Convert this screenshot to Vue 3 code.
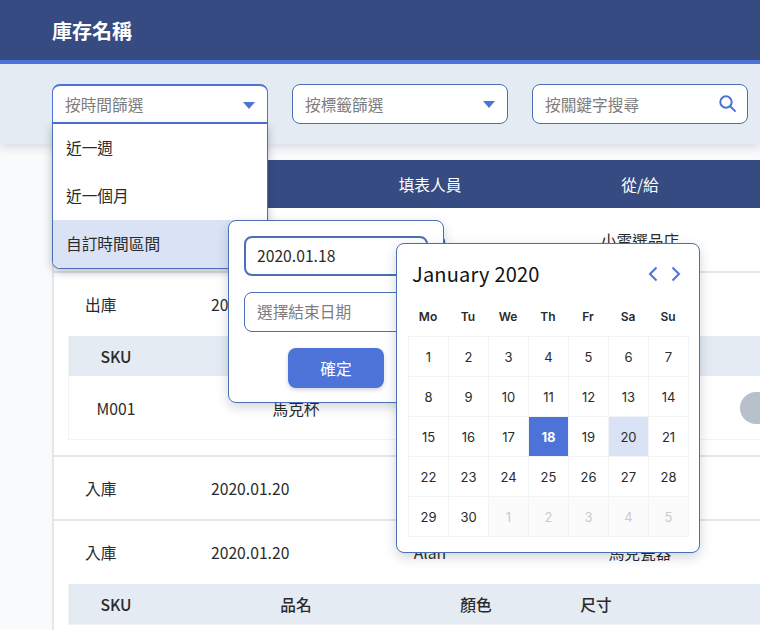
<script setup>
import { ref } from 'vue'

const timeOptions = ['近一週', '近一個月', '自訂時間區間']
const weekDays = ['Mo', 'Tu', 'We', 'Th', 'Fr', 'Sa', 'Su']

// 1 月從週一開始，最後補上下個月的五天
const days = []
for (let d = 1; d <= 30; d++) days.push({ label: d, muted: false })
for (let d = 1; d <= 5; d++) days.push({ label: d, muted: true })

const startDay = ref(18)
const hoverDay = ref(20)

function dayClass(day) {
  if (day.muted) return 'muted'
  if (day.label === startDay.value) return 'start'
  if (day.label === hoverDay.value) return 'hover'
  return ''
}
</script>

<template>
  <div class="page">
    <header class="top">
      <h1>庫存名稱</h1>
    </header>

    <section class="filters">
      <div class="select open">
        <span class="ph">按時間篩選</span>
        <i class="caret"></i>
        <ul class="menu">
          <li v-for="(opt, i) in timeOptions" :key="opt" :class="{ active: i === 2 }">{{ opt }}</li>
        </ul>
        <div class="range">
          <div class="field focus">2020.01.18</div>
          <div class="field ph">選擇結束日期</div>
          <button class="ok">確定</button>
        </div>
        <div class="calendar">
          <div class="cal-head">
            <strong>January 2020</strong>
            <span class="arrows">
              <svg width="10" height="16" viewBox="0 0 10 16"><path d="M8.5 1.5 2 8l6.5 6.5" /></svg>
              <svg width="10" height="16" viewBox="0 0 10 16"><path d="M1.5 1.5 8 8l-6.5 6.5" /></svg>
            </span>
          </div>
          <div class="week">
            <span v-for="w in weekDays" :key="w">{{ w }}</span>
          </div>
          <div class="days">
            <span v-for="(day, i) in days" :key="i" :class="dayClass(day)">{{ day.label }}</span>
          </div>
        </div>
      </div>
      <div class="select">
        <span class="ph">按標籤篩選</span>
        <i class="caret"></i>
      </div>
      <div class="select">
        <span class="ph">按關鍵字搜尋</span>
        <svg class="search" width="20" height="20" viewBox="0 0 20 20">
          <circle cx="8" cy="8" r="5.7" />
          <path d="m12.2 12.2 5.4 5.4" />
        </svg>
      </div>
    </section>

    <main class="content">
      <div class="table">
        <div class="row head">
          <span></span><span></span><span>填表人員</span><span>從/給</span>
        </div>

        <div class="row first">
          <span></span><span></span><span>Alan</span><span>小雲選品店</span>
        </div>

        <div class="group">
          <div class="row">
            <span>出庫</span><span>2020.01.20</span><span></span><span></span>
          </div>
          <div class="sub">
            <div class="sub-row sub-head">
              <span>SKU</span><span></span><span></span><span></span>
            </div>
            <div class="sub-row sub-body">
              <span>M001</span><span>馬克杯</span><span></span><span></span>
              <i class="pill"></i>
            </div>
          </div>
        </div>

        <div class="row">
          <span>入庫</span><span>2020.01.20</span><span></span><span></span>
        </div>

        <div class="group">
          <div class="row">
            <span>入庫</span><span>2020.01.20</span><span>Alan</span><span>馬克瓷器</span>
          </div>
          <div class="sub">
            <div class="sub-row sub-head">
              <span>SKU</span><span>品名</span><span>顏色</span><span>尺寸</span>
            </div>
          </div>
        </div>
      </div>
    </main>
  </div>
</template>

<style>
html, body { margin: 0; }
body { overflow: hidden; }
</style>

<style scoped>
.page {
  width: 760px;
  height: 630px;
  overflow: hidden;
  position: relative;
  background: #f8fafc;
  color: #2a2a2a;
  font-family: "Noto Sans CJK TC", "Noto Sans", sans-serif;
  font-size: 15.7px;
}
.top {
  height: 60px;
  background: #364b82;
  border-bottom: 4px solid #4d73d9;
  display: flex;
  align-items: center;
  padding-left: 52px;
}
.top h1 {
  margin: 2px 0 0;
  color: #fff;
  font-size: 20px;
  font-weight: 700;
  line-height: 60px;
}
.filters {
  position: relative;
  z-index: 2;
  height: 80px;
  box-sizing: border-box;
  padding: 20px 52px;
  display: flex;
  gap: 24px;
  background: #e4ebf3;
  box-shadow: 0 4px 8px rgba(40, 60, 90, 0.14);
}
.select {
  position: relative;
  flex: 0 0 216px;
  height: 40px;
  box-sizing: border-box;
  border: 1px solid #4a6fb5;
  border-radius: 8px;
  background: #fff;
  display: flex;
  align-items: center;
  padding-left: 12px;
}
.select.open {
  border-color: #4d73d9;
  border-width: 2px 1px;
  border-bottom-left-radius: 0;
  border-bottom-right-radius: 0;
  z-index: 3;
}
.ph { color: #7d7d7d; }
.caret {
  position: absolute;
  right: 12px;
  top: 16px;
  width: 0;
  height: 0;
  border-left: 6.5px solid transparent;
  border-right: 6.5px solid transparent;
  border-top: 7px solid #4d73d9;
}
.search {
  position: absolute;
  right: 9px;
  top: 9px;
  fill: none;
  stroke: #4d73d9;
  stroke-width: 2;
}
.menu {
  position: absolute;
  left: -1px;
  right: -1px;
  top: 38px;
  margin: 0;
  padding: 0;
  list-style: none;
  background: #fff;
  border: 1px solid #4a6fb5;
  border-top: 0;
  border-radius: 0 0 8px 8px;
  overflow: hidden;
  box-shadow: 0 3px 8px rgba(30, 40, 60, 0.3);
}
.menu li {
  height: 48px;
  line-height: 47px;
  padding-left: 13px;
}
.menu li.active { background: #dae3f5; }
.range {
  position: absolute;
  left: 175px;
  top: 134px;
  width: 216px;
  height: 183px;
  box-sizing: border-box;
  padding: 15px;
  background: #fff;
  border: 1px solid #4a6fb5;
  border-radius: 8px;
  box-shadow: 0 4px 12px rgba(30, 40, 60, 0.2);
  display: flex;
  flex-direction: column;
  align-items: center;
  gap: 16px;
}
.field {
  width: 184px;
  height: 40px;
  flex: none;
  box-sizing: border-box;
  border: 1px solid #4a6fb5;
  border-radius: 8px;
  padding-left: 12px;
  line-height: 38px;
}
.field.focus {
  border: 2px solid #4a6fb5;
  padding-left: 11px;
  line-height: 36px;
}
.ok {
  width: 96px;
  height: 40px;
  flex: none;
  border: 0;
  border-radius: 8px;
  background: #4d73d9;
  color: #fff;
  font: inherit;
  box-shadow: 0 2px 4px rgba(30, 40, 60, 0.2);
}
.calendar {
  position: absolute;
  left: 343px;
  top: 157px;
  width: 304px;
  height: 310px;
  box-sizing: border-box;
  padding: 0 11px;
  background: #fff;
  border: 1px solid #4a6fb5;
  border-radius: 8px;
  box-shadow: 0 4px 12px rgba(30, 40, 60, 0.2);
}
.cal-head {
  height: 62px;
  box-sizing: border-box;
  padding: 0 4px 4px;
  display: flex;
  align-items: center;
  justify-content: space-between;
}
.cal-head strong {
  font-size: 20px;
  font-weight: 400;
  letter-spacing: 0.2px;
  color: #111;
}
.arrows {
  display: flex;
  gap: 13px;
  margin: 2px 3px 0 0;
}
.arrows path {
  fill: none;
  stroke: #4d73d9;
  stroke-width: 2;
}
.week {
  display: grid;
  grid-template-columns: repeat(7, 40px);
  height: 30px;
  font-family: Inter, sans-serif;
  font-size: 12px;
  font-weight: 600;
  text-align: center;
  line-height: 22px;
}
.days {
  display: grid;
  grid-template-columns: repeat(7, 40px);
  grid-auto-rows: 40px;
  width: 281px;
  border-top: 1px solid #f2f3f5;
  border-left: 1px solid #f2f3f5;
  font-family: Inter, sans-serif;
  font-size: 13px;
}
.days span {
  box-sizing: border-box;
  border-right: 1px solid #f2f3f5;
  border-bottom: 1px solid #f2f3f5;
  display: flex;
  align-items: center;
  justify-content: center;
}
.days .muted { background: #fbfbfc; color: #c8cacc; }
.days .start { background: #4d73d9; color: #fff; font-weight: 700; }
.days .hover { background: #dae3f5; }
.content {
  padding: 16px 0 0 52px;
}
.table {
  width: 760px;
  border-left: 2px solid #e4e7ea;
  background: #fff;
}
.row {
  display: grid;
  grid-template-columns: 96px 200px 160px 260px;
  height: 64px;
  box-sizing: border-box;
  align-items: center;
  text-align: center;
  border-bottom: 2px solid #e4e7ea;
}
.row.first { height: 65px; padding-top: 2px; }
.row span:first-child,
.row span:nth-child(2) { text-align: left; }
.row span:first-child { padding-left: 31px; }
.row span:nth-child(2) { padding-left: 61px; }
.row.head {
  height: 48px;
  background: #364b82;
  color: #fff;
  border-bottom: 0;
}
.group {
  border-bottom: 2px solid #e4e7ea;
  padding-bottom: 15px;
}
.group .row { height: 63px; border-bottom: 0; }
.sub {
  margin-left: 14px;
  border-bottom: 1px solid #f2f3f5;
  border-left: 1px solid #f2f3f5;
}
.sub-row {
  display: grid;
  grid-template-columns: 94px 266px 94px 146px;
  align-items: center;
  text-align: center;
  position: relative;
}
.sub-head {
  height: 40px;
  background: #e4ebf3;
  font-weight: 500;
}
.sub-body { height: 63px; padding-top: 2px; box-sizing: border-box; }
.pill {
  position: absolute;
  left: 671px;
  top: 16px;
  width: 60px;
  height: 32px;
  border-radius: 16px;
  background: #b8c0cc;
}
</style>
